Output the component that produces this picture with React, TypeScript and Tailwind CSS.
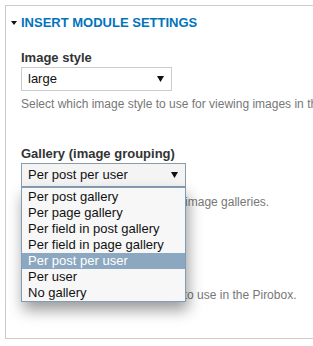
import React from "react";

const F = "'Liberation Sans', Arial, sans-serif";

const options = [
  "Per post gallery",
  "Per page gallery",
  "Per field in post gallery",
  "Per field in page gallery",
  "Per post per user",
  "Per user",
  "No gallery",
];
const selected = "Per post per user";

function Arrow() {
  return (
    <svg width="7" height="6" viewBox="0 0 7 6" className="shrink-0">
      <path d="M0 0H7L3.5 6Z" fill="#111" />
    </svg>
  );
}

export default function App() {
  return (
    <div className="relative w-[313px] h-[346px] overflow-hidden bg-white" style={{ fontFamily: F }}>
      <div className="ml-[5px] mt-[5px] h-[334px] border border-r-0 border-[#cccccc] pl-[15px] pt-[9px]">
        <div className="flex items-center h-[16px] -ml-[10px]">
          <svg width="6" height="4" viewBox="0 0 6 4" className="mr-[4px]">
            <path d="M0 0H6L3 4Z" fill="#111" />
          </svg>
          <span className="text-[13px] font-bold uppercase text-[#0074bd] leading-[16px]">
            Insert module settings
          </span>
        </div>

        <div className="mt-[19px]">
          <label className="block text-[13px] font-bold text-[#333] leading-[15px]">Image style</label>
          <div className="mt-[2px] w-[151px] h-[24px] border border-[#cccccc] bg-white flex items-center justify-between pl-[6px] pr-[7px]">
            <span className="text-[13px] text-[#111]">large</span>
            <Arrow />
          </div>
          <p className="mt-[6px] text-[12px] text-[#777] leading-[14px] whitespace-nowrap">
            Select which image style to use for viewing images in the Pirobox.
          </p>
        </div>

        <div className="mt-[35px]">
          <label className="block text-[13px] font-bold text-[#333] leading-[15px]">Gallery (image grouping)</label>
          <div className="mt-[2px] w-[165px] h-[24px] border border-[#8c9bab] bg-[#f4f4f4] flex items-center justify-between pl-[6px] pr-[7px]">
            <span className="text-[13px] text-[#111]">{selected}</span>
            <Arrow />
          </div>
          <p className="mt-[8px] text-[12px] text-[#777] leading-[14px] whitespace-nowrap">
            Select how to group images in image galleries.
          </p>
        </div>

        <div className="mt-[32px]">
          <label className="block text-[13px] font-bold text-[#333] leading-[15px]">Gallery style</label>
          <div className="mt-[2px] w-[151px] h-[24px] border border-[#cccccc] bg-white flex items-center justify-between pl-[6px] pr-[7px]">
            <span className="text-[13px] text-[#111]">default</span>
            <Arrow />
          </div>
          <p className="mt-[6px] text-[12px] text-[#777] leading-[14px] whitespace-nowrap">
            Choose which slideshow style to use in the Pirobox.
          </p>
        </div>
      </div>

      <ul className="absolute left-[21px] top-[187px] w-[165px] border border-[#7f9db9] bg-[#f7f7f7] pt-[1px] shadow-[2px_8px_14px_rgba(0,0,0,0.4)]">
        {options.map((o) => (
          <li
            key={o}
            className={
              o === selected
                ? "h-[16px] leading-[16px] pl-[6px] text-[13px] bg-[#8ca8c1] text-white"
                : "h-[16px] leading-[16px] pl-[6px] text-[13px] text-[#111]"
            }
          >
            {o}
          </li>
        ))}
      </ul>
    </div>
  );
}
